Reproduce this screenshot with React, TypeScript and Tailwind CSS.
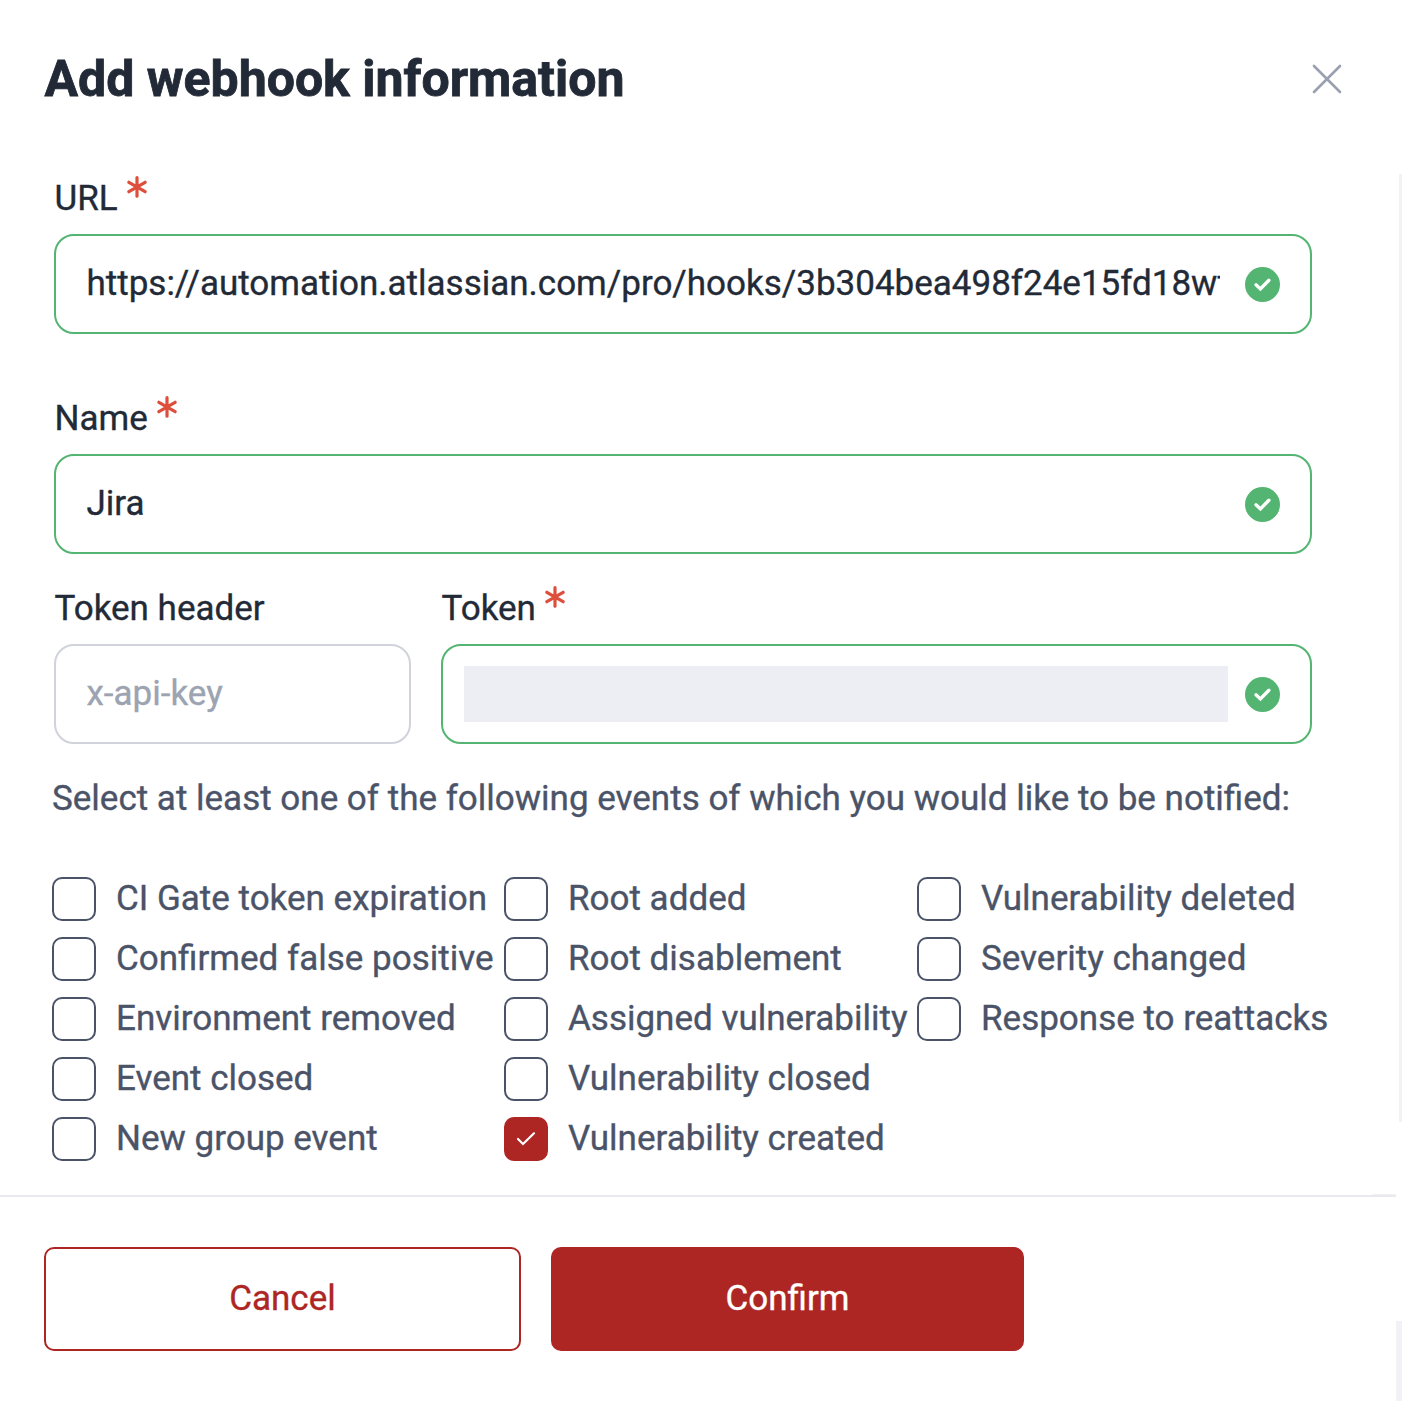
import React from "react";

const Star = () => (
  <svg width="20" height="22" viewBox="0 0 20 22" className="mt-0 ml-[9.5px]" fill="none" stroke="#dd4f3c" strokeWidth="3.2" strokeLinecap="round">
    <path d="M10 1.6v18.6M1.9 6.3l16.2 9.4M18.1 6.3L1.9 15.7" />
  </svg>
);

const Ok = () => (
  <svg width="35" height="35" viewBox="0 0 35 35" className="mt-px mr-[30px] ml-auto shrink-0">
    <circle cx="17.5" cy="17.5" r="17.5" fill="#54b471" />
    <path d="M11 17.8l4.4 4.1 8.5-8.6" fill="none" stroke="#fff" strokeWidth="3.4" strokeLinecap="round" />
  </svg>
);

const Label = ({ text, required }: { text: string; required?: boolean }) => (
  <div className="flex h-[58px] items-start pl-[0.5px]">
    <span className="leading-[46px] whitespace-nowrap">{text}</span>
    {required && <Star />}
  </div>
);

const Field = ({ children, valid }: { children?: React.ReactNode; valid?: boolean }) => (
  <div className={`flex h-[100px] items-center rounded-[20px] border-2 ${valid ? "border-[#54b471]" : "border-[#d0d3da]"}`}>
    {children}
    {valid && <Ok />}
  </div>
);

const Check = ({ text, on }: { text: string; on?: boolean }) => (
  <div className="flex h-[60px] items-start">
    <span className={`mt-px flex size-11 shrink-0 items-center justify-center rounded-[10px] border-2 ${on ? "border-[#ad2624] bg-[#ad2624]" : "border-[#4a5367]"}`}>
      {on && (
        <svg width="20" height="16" viewBox="0 0 20 16" fill="none" stroke="#fff" strokeWidth="2.2" strokeLinecap="round">
          <path d="M2 8l5 5L18 2.3" />
        </svg>
      )}
    </span>
    <span className="ml-5 leading-[46px] whitespace-nowrap">{text}</span>
  </div>
);

const columns = [
  ["CI Gate token expiration", "Confirmed false positive", "Environment removed", "Event closed", "New group event"],
  ["Root added", "Root disablement", "Assigned vulnerability", "Vulnerability closed", "Vulnerability created"],
  ["Vulnerability deleted", "Severity changed", "Response to reattacks"],
];

export default function App() {
  return (
    <div className="relative flex h-[1401px] w-[1402px] flex-col overflow-hidden bg-white font-['Roboto',sans-serif] text-[35px] text-[#222a37] [-webkit-text-stroke:0.35px_currentColor]">
      <header className="flex h-[176px] shrink-0 items-start justify-between pr-[60px] pl-[44.5px]">
        <h1 className="pt-[49px] text-[50px] leading-[60px] font-bold [-webkit-text-stroke:0.8px_currentColor]">Add webhook information</h1>
        <button aria-label="Close" className="mt-16">
          <svg width="30" height="30" viewBox="0 0 30 30" fill="none" stroke="#9aa0b0" strokeWidth="2.6" strokeLinecap="round">
            <path d="M2 2l26 26M28 2L2 28" />
          </svg>
        </button>
      </header>

      <form className="ml-[54px] w-[1258px] shrink-0">
        <Label text="URL" required />
        <Field valid>
          <span className="ml-[30px] w-[1134px] overflow-hidden pl-[0.5px] whitespace-nowrap">
            https://automation.atlassian.com/pro/hooks/3b304bea498f24e15fd18wt
          </span>
        </Field>
        <div className="mt-[62px]">
          <Label text="Name" required />
          <Field valid>
            <span className="ml-[30.5px]">Jira</span>
          </Field>
        </div>
        <div className="mt-8 grid grid-cols-[357px_871px] gap-[30px]">
          <div>
            <Label text="Token header" />
            <Field>
              <span className="ml-[30.5px] text-[#9ca3b1]">x-api-key</span>
            </Field>
          </div>
          <div>
            <Label text="Token" required />
            <Field valid>
              <span className="ml-[21px] h-14 w-[764px] bg-[#edeef3]" />
            </Field>
          </div>
        </div>
      </form>

      <section className="mt-8 ml-[52px] shrink-0 text-[#4a5367]">
        <p className="h-11 leading-[46px]">Select at least one of the following events of which you would like to be notified:</p>
        <div className="mt-14 grid grid-cols-[452px_413px_430px]">
          {columns.map((items) => (
            <div key={items[0]}>
              {items.map((item) => (
                <Check key={item} text={item} on={item === "Vulnerability created"} />
              ))}
            </div>
          ))}
        </div>
      </section>

      <footer className="mt-[19px] mr-1.5 flex gap-[30px] border-t-2 border-[#e9eaef] pt-[50px] pl-11">
        <button className="h-[104px] w-[477px] rounded-[10px] border-2 border-[#ad2624] text-[#ad2624]">Cancel</button>
        <button className="h-[104px] w-[473px] rounded-[10px] bg-[#ad2624] text-white">Confirm</button>
      </footer>

      <div className="absolute top-[174px] right-0 h-[948px] w-[3px] bg-[#f2f2f3]" />
      <div className="absolute top-[1194px] right-1.5 h-px w-6 bg-[#f1f1f3]" />
      <div className="absolute right-0 bottom-0 h-20 w-1.5 bg-[#f2f2f6]" />
    </div>
  );
}
